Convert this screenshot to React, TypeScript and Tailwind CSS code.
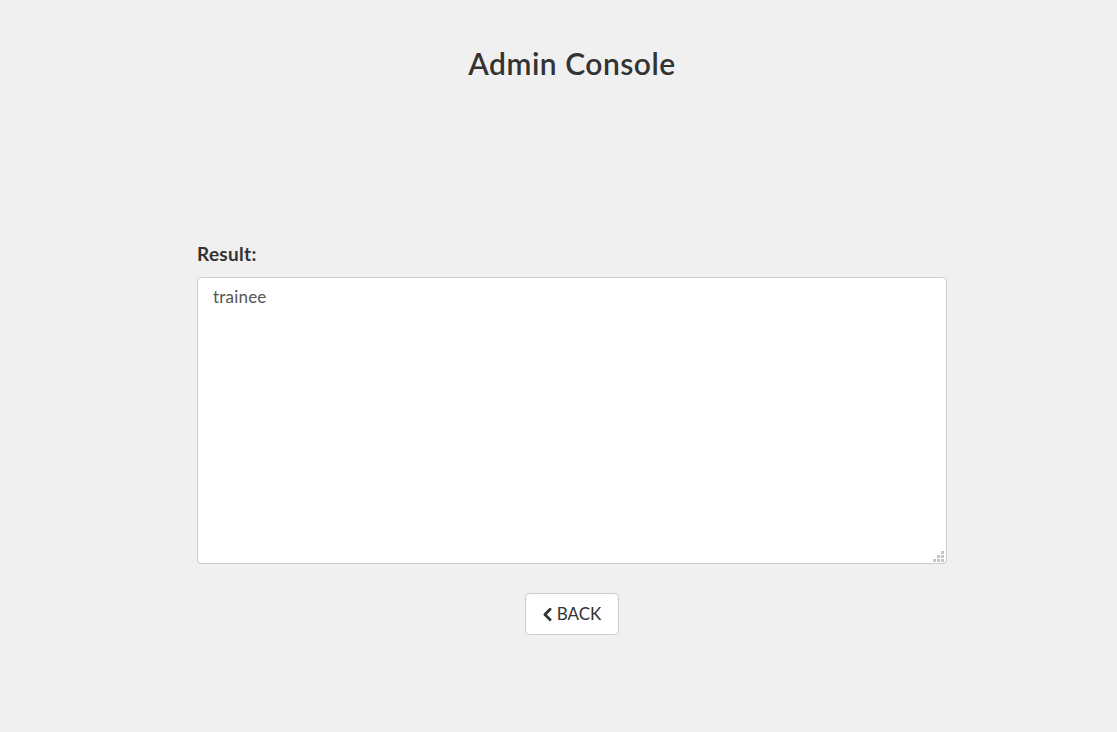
import React from 'react';
import { ChevronLeft } from 'lucide-react';

// resize grip: cells that are filled, row by row
const grip = [
  [false, false, true],
  [false, true, true],
  [true, true, true],
];

const App: React.FC = () => {
  return (
    <div className="min-h-[732px] bg-[#f0f0f0] text-[#333] font-['Lato','Liberation_Sans',sans-serif]">
      <div className="flex justify-center pl-[27px]">
        <div className="w-[750px] flex flex-col">
          <h1 className="text-center text-[30px] font-semibold tracking-[0.5px] leading-none mt-[48px]">Admin Console</h1>

          {/* Result box */}
          <label className="mt-[166px] text-[19px] font-bold tracking-[0.3px] leading-none">Result:</label>
          <div className="relative mt-[14px]">
            <textarea
              readOnly
              value="trainee"
              className="block w-full h-[287px] resize-none rounded-[4px] border border-[#ccc] bg-white px-[15px] pt-[6px] pb-[8px] text-[17px] tracking-[0.2px] text-[#555] outline-none"
            />
            <div className="absolute right-[3px] bottom-[2px] grid grid-cols-3 gap-[1px]">
              {grip.map((row, r) =>
                row.map((on, c) => (
                  <span
                    key={`${r}-${c}`}
                    className={on ? 'w-[3px] h-[3px] bg-[#c4c4c4]' : 'w-[3px] h-[3px]'}
                  />
                ))
              )}
            </div>
          </div>

          <div className="flex justify-center mt-[29px]">
            <button className="flex items-center h-[42px] w-[94px] justify-center rounded-[4px] border border-[#ccc] bg-white text-[17px] text-[#333]">
              <ChevronLeft className="w-[21px] h-[21px] -ml-[6px] -mr-[1px]" strokeWidth={3.2} />
              <span>BACK</span>
            </button>
          </div>
        </div>
      </div>
    </div>
  );
};

export default App;
